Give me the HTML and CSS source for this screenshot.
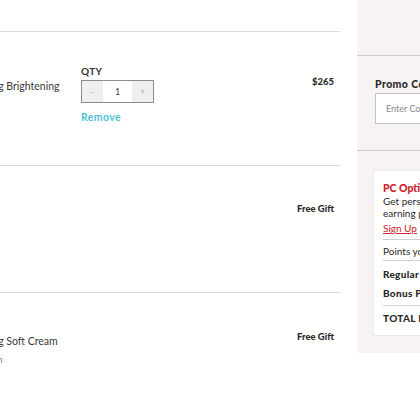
FILE: index.html
```html
<!DOCTYPE html>
<html>
<head>
<meta charset="utf-8">
<link rel="stylesheet" href="styles.css">
</head>
<body>
<div class="page">
  <div class="cart">
    <div class="cart-top"></div>
    <div class="item item-1">
      <div class="name">Illuminating Brightening</div>
      <div class="qty">
        <div class="qty-label">QTY</div>
        <div class="qty-box">
          <span class="qty-btn">-</span>
          <span class="qty-val">1</span>
          <span class="qty-btn">+</span>
        </div>
        <a class="remove">Remove</a>
      </div>
      <div class="price">$265</div>
    </div>
    <div class="item item-2">
      <div class="name"></div>
      <div class="qty"></div>
      <div class="price">Free Gift</div>
    </div>
    <div class="item item-3">
      <div class="name">Illuminating Soft Cream<div class="sub">Travel Edition</div></div>
      <div class="qty"></div>
      <div class="price">Free Gift</div>
    </div>
  </div>
  <aside class="summary">
    <div class="summary-top"></div>
    <div class="promo">
      <div class="promo-label">Promo Code</div>
      <div class="promo-input">Enter Code</div>
    </div>
    <div class="points">
      <div class="card">
        <div class="card-title">PC Optimum</div>
        <div class="card-text">Get personalized offers and start</div>
        <div class="card-text">earning points faster.</div>
        <div class="card-link">Sign Up</div>
        <div class="card-row card-sep">Points you'll earn</div>
        <div class="card-row bold">Regular Points</div>
        <div class="card-row bold">Bonus Points</div>
        <div class="card-row bold total">TOTAL POINTS</div>
      </div>
    </div>
  </aside>
</div>
</body>
</html>
```
FILE: styles.css
```css
html, body {
  margin: 0;
  padding: 0;
  background: #fff;
  overflow: hidden;
}
body {
  font-family: Lato, "Open Sans", sans-serif;
  color: #333;
  width: 420px;
  height: 420px;
}
.page {
  display: flex;
  align-items: flex-start;
  gap: 17px;
}
.cart {
  margin-left: -50px;
  width: 390px;
  flex: none;
}
.cart-top {
  height: 31px;
}
.item {
  display: flex;
  align-items: flex-start;
  border-top: 1px solid #dcdcdc;
}
.item-1 { height: 133px; }
.item-2 { height: 126px; }
.item-3 { height: 120px; }
.name {
  width: 131px;
  font-size: 10.5px;
  line-height: 14px;
  color: #3a3a3a;
  white-space: nowrap;
}
.item-1 .name { margin-top: 47px; }
.item-3 .name { margin-top: 41px; }
.sub {
  margin-top: 5px;
  margin-left: -1px;
  font-size: 9px;
  color: #777;
}
.qty {
  width: 80px;
}
.qty-label {
  margin-top: 32px;
  font-size: 10px;
  font-weight: 700;
  line-height: 14px;
  color: #333;
  letter-spacing: 0.3px;
}
.qty-box {
  margin-top: 2px;
  display: flex;
  width: 71px;
  height: 21px;
  border: 1px solid #8c8c8c;
}
.qty-btn {
  width: 21px;
  background: #efefef;
  color: #aaa;
  font-size: 9px;
  display: flex;
  align-items: center;
  justify-content: center;
}
.qty-val {
  flex: 1;
  display: flex;
  align-items: center;
  justify-content: center;
  font-size: 9px;
  color: #444;
}
.remove {
  display: block;
  margin-top: 7px;
  font-size: 10.5px;
  font-weight: 700;
  line-height: 14px;
  color: #4cbfd4;
  letter-spacing: 0.4px;
}
.price {
  margin-left: auto;
  padding-right: 6px;
  font-size: 9.5px;
  font-weight: 900;
  line-height: 14px;
  color: #2b2b2b;
}
.item-1 .price { margin-top: 43px; }
.item-2 .price { margin-top: 36px; }
.item-3 .price { margin-top: 37px; }

.summary {
  flex: none;
  width: 200px;
  height: 353px;
  background: #f7f3f2;
}
.summary-top {
  height: 55px;
  border-bottom: 1px solid #cfcbca;
}
.promo {
  height: 73px;
  padding: 21px 0 0 18px;
  border-bottom: 1px solid #cfcbca;
}
.promo-label {
  font-size: 10.5px;
  font-weight: 900;
  line-height: 14px;
  color: #2b2b2b;
  letter-spacing: 0.4px;
}
.promo-input {
  margin-top: 2px;
  height: 29px;
  border: 1px solid #c4c4c4;
  background: #fff;
  font-size: 9px;
  line-height: 29px;
  padding-left: 10px;
  color: #888;
}
.points {
  padding: 19px 0 0 16px;
}
.card {
  background: #fff;
  border: 1px solid #ece8e7;
  height: 153px;
  padding: 11px 0 0 9px;
  white-space: nowrap;
}
.card-title {
  font-size: 10.5px;
  font-weight: 900;
  color: #d0212a;
  line-height: 13px;
}
.card-text {
  font-size: 10px;
  line-height: 12px;
  color: #2b2b2b;
}
.card-link {
  margin-top: 3px;
  font-size: 10px;
  line-height: 12px;
  color: #d0212a;
  text-decoration: underline;
  padding-bottom: 5px;
  border-bottom: 1px solid #cfcfcf;
}
.card-row {
  font-size: 10px;
  line-height: 12px;
  color: #2b2b2b;
}
.card-sep {
  padding: 5px 0 3px;
  border-bottom: 1px solid #cfcfcf;
}
.bold {
  font-weight: 900;
  margin-top: 7px;
  letter-spacing: 0.3px;
}
.total {
  border-top: 1px solid #cfcfcf;
  padding-top: 6px;
  margin-top: 6px;
}
```
